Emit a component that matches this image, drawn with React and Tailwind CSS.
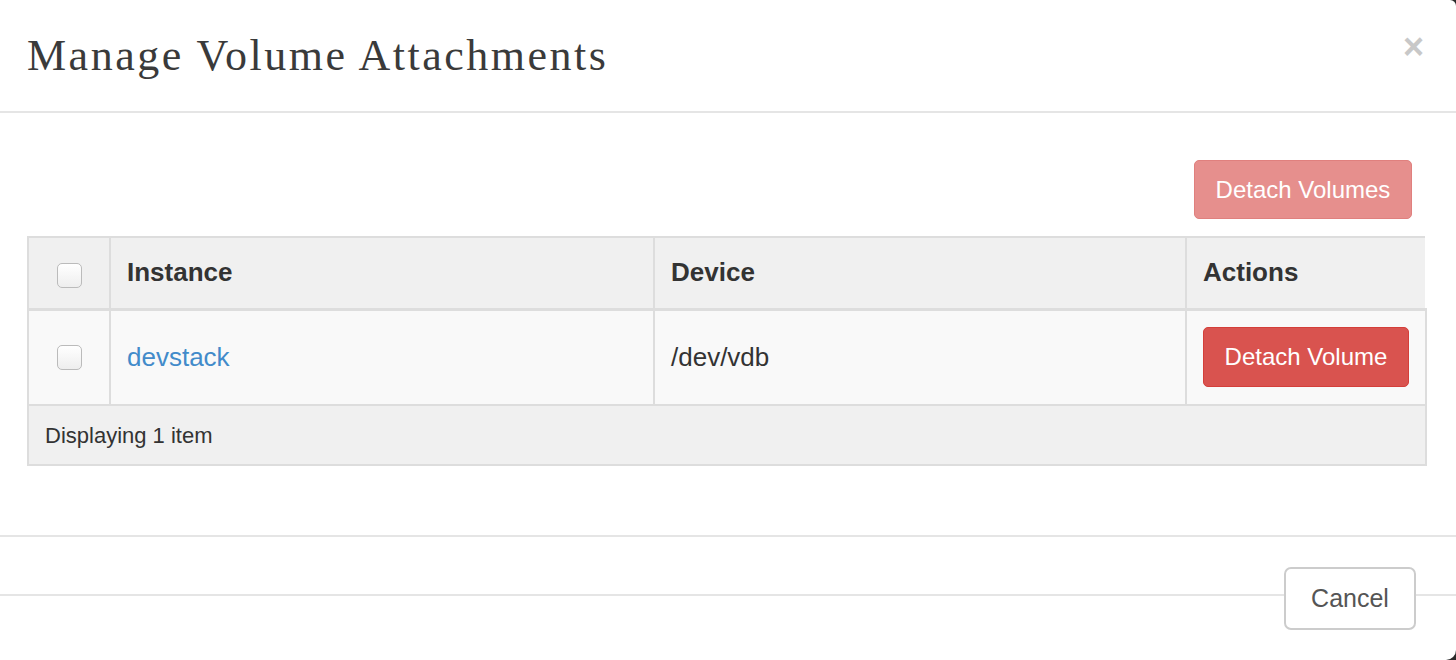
export default function App() {
  const sans = { fontFamily: '"Liberation Sans", Arial, sans-serif' }

  return (
    <div className="w-[1456px] h-[660px] bg-[#2a2a2a] overflow-hidden" style={sans}>
      <div className="w-full h-full bg-white rounded-tr-[6px] rounded-br-[10px] flex flex-col">
        {/* Header */}
        <div className="h-[113px] border-b-2 border-[#e5e5e5] flex items-start justify-between pl-[27px] pr-[32px]">
          <h1
            className="mt-[30px] text-[44px] leading-[52px] tracking-[2.5px] text-[#3a3a3a]"
            style={{ fontFamily: '"Liberation Serif", "Times New Roman", serif', fontWeight: 300 }}
          >
            Manage Volume Attachments
          </h1>
          <button className="mt-[29px] text-[36px] leading-[36px] font-bold text-[#c8c8c8]">×</button>
        </div>

        {/* Body */}
        <div className="h-[422px] px-[27px] pt-[47px]">
          <div className="flex justify-end pr-[17px]">
            <button className="w-[218px] h-[59px] rounded-[5px] bg-[#e68f8d] border border-[#e0807e] text-white text-[24px]">
              Detach Volumes
            </button>
          </div>

          <table className="mt-[17px] w-[1400px] border-collapse border-2 border-[#ddd] text-[#333]">
            <thead>
              <tr className="bg-[#f0f0f0] h-[72px] border-b-[3px] border-[#ddd]">
                <th className="w-[82px] border-r-2 border-[#ddd]">
                  <div className="mx-auto mt-[6px] w-[25px] h-[25px] rounded-[5px] border border-[#bbb] bg-gradient-to-b from-white to-[#eee]" />
                </th>
                <th className="w-[544px] border-r-2 border-[#ddd] text-left pl-[16px] text-[26px] font-bold">Instance</th>
                <th className="w-[532px] border-r-2 border-[#ddd] text-left pl-[16px] text-[26px] font-bold">Device</th>
                <th className="text-left pl-[16px] text-[26px] font-bold border-r-2 border-b-2 border-white">Actions</th>
              </tr>
            </thead>
            <tbody>
              <tr className="bg-[#f9f9f9] h-[96px] border-b-2 border-[#ddd]">
                <td className="border-r-2 border-[#ddd]">
                  <div className="mx-auto w-[25px] h-[25px] rounded-[5px] border border-[#bbb] bg-gradient-to-b from-white to-[#eee]" />
                </td>
                <td className="border-r-2 border-[#ddd] pl-[16px] text-[26px] text-[#428bca]">devstack</td>
                <td className="border-r-2 border-[#ddd] pl-[16px] text-[26px]">/dev/vdb</td>
                <td className="pl-[16px]">
                  <button className="w-[206px] h-[60px] rounded-[5px] bg-[#d9534f] border border-[#d43f3a] text-white text-[24px]">
                    Detach Volume
                  </button>
                </td>
              </tr>
            </tbody>
            <tfoot>
              <tr className="bg-[#f0f0f0] h-[60px]">
                <td colSpan={4} className="pl-[16px] text-[22px]">Displaying 1 item</td>
              </tr>
            </tfoot>
          </table>
        </div>

        {/* Footer */}
        <div className="relative flex-1 border-t-2 border-[#e5e5e5]">
          <div className="absolute left-0 right-0 top-[57px] h-[2px] bg-[#e5e5e5]" />
          <div className="relative flex justify-end pr-[40px] pt-[30px]">
            <button className="w-[132px] h-[63px] rounded-[7px] bg-white border-2 border-[#ccc] text-[#555] text-[25px]">
              Cancel
            </button>
          </div>
        </div>
      </div>
    </div>
  )
}
